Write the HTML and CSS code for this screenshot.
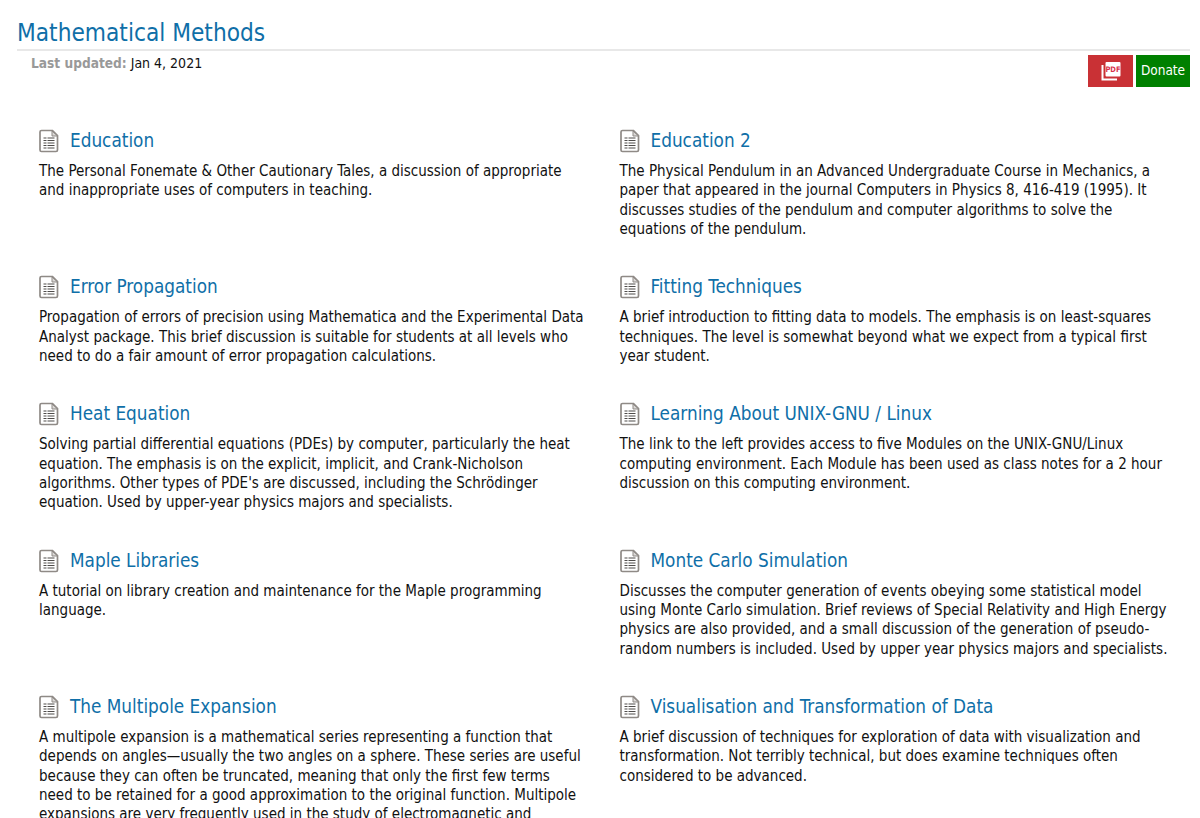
FILE: index.html
```html
<!DOCTYPE html>
<html lang="en">
<head>
    <meta charset="UTF-8" />
    <title>Mathematical Methods</title>
    <link rel="stylesheet" href="styles.css">
</head>
<body>
    <svg class="icon-defs" width="0" height="0">
        <symbol id="doc" viewBox="0 0 20 24">
            <path d="M2.500 1.500h11l5 5v14.500a1.500 1.500 0 0 1-1.500 1.500h-14.500a1.500 1.500 0 0 1-1.500-1.500v-18a1.500 1.500 0 0 1 1.500-1.500z" fill="#fff" stroke="#8f8a86" stroke-width="1.700"/>
            <path d="M13 2v5h5.500z" fill="#dcdad8" stroke="#8f8a86" stroke-width="1"/>
            <path d="M4.500 9h3M8.500 9h7M4.500 11.500h3M8.500 11.500h7M4.500 14h3M8.500 14h7M4.500 16.500h3M8.500 16.500h7M4.500 19h3M8.500 19h7" stroke="#4f4c4a" stroke-width="1.100"/>
        </symbol>
    </svg>

    <header class="page-head">
        <h1>Mathematical Methods</h1>
        <div class="meta-bar">
            <p class="updated"><strong>Last updated:</strong> Jan 4, 2021</p>
            <div class="actions">
                <a class="btn btn-pdf" href="#" aria-label="PDF">
                    <svg width="20" height="20" viewBox="0 0 20 20">
                        <path d="M1.500 4v14.500H16" fill="none" stroke="#fff" stroke-width="2"/>
                        <rect x="4.500" y="1" width="15" height="14.500" rx="1" fill="#fff"/>
                        <text x="12" y="11" class="pdf-label">PDF</text>
                    </svg>
                </a>
                <a class="btn btn-donate" href="#">Donate</a>
            </div>
        </div>
    </header>

    <main class="topics">
        <section class="topic">
            <h2><svg class="doc"><use href="#doc"/></svg><a href="#">Education</a></h2>
            <p>The Personal Fonemate &amp; Other Cautionary Tales, a discussion of appropriate and inappropriate uses of computers in teaching.</p>
        </section>
        <section class="topic">
            <h2><svg class="doc"><use href="#doc"/></svg><a href="#">Education 2</a></h2>
            <p>The Physical Pendulum in an Advanced Undergraduate Course in Mechanics, a paper that appeared in the journal Computers in Physics 8, 416-419 (1995). It discusses studies of the pendulum and computer algorithms to solve the equations of the pendulum.</p>
        </section>
        <section class="topic">
            <h2><svg class="doc"><use href="#doc"/></svg><a href="#">Error Propagation</a></h2>
            <p>Propagation of errors of precision using Mathematica and the Experimental Data Analyst package. This brief discussion is suitable for students at all levels who need to do a fair amount of error propagation calculations.</p>
        </section>
        <section class="topic">
            <h2><svg class="doc"><use href="#doc"/></svg><a href="#">Fitting Techniques</a></h2>
            <p>A brief introduction to fitting data to models. The emphasis is on least-squares techniques. The level is somewhat beyond what we expect from a typical first year student.</p>
        </section>
        <section class="topic">
            <h2><svg class="doc"><use href="#doc"/></svg><a href="#">Heat Equation</a></h2>
            <p>Solving partial differential equations (PDEs) by computer, particularly the heat equation. The emphasis is on the explicit, implicit, and Crank-Nicholson algorithms. Other types of PDE's are discussed, including the Schrödinger equation. Used by upper-year physics majors and specialists.</p>
        </section>
        <section class="topic">
            <h2><svg class="doc"><use href="#doc"/></svg><a href="#">Learning About UNIX-GNU / Linux</a></h2>
            <p>The link to the left provides access to five Modules on the UNIX-GNU/Linux computing environment. Each Module has been used as class notes for a 2 hour discussion on this computing environment.</p>
        </section>
        <section class="topic">
            <h2><svg class="doc"><use href="#doc"/></svg><a href="#">Maple Libraries</a></h2>
            <p>A tutorial on library creation and maintenance for the Maple programming language.</p>
        </section>
        <section class="topic">
            <h2><svg class="doc"><use href="#doc"/></svg><a href="#">Monte Carlo Simulation</a></h2>
            <p>Discusses the computer generation of events obeying some statistical model using Monte Carlo simulation. Brief reviews of Special Relativity and High Energy physics are also provided, and a small discussion of the generation of pseudo-random numbers is included. Used by upper year physics majors and specialists.</p>
        </section>
        <section class="topic">
            <h2><svg class="doc"><use href="#doc"/></svg><a href="#">The Multipole Expansion</a></h2>
            <p>A multipole expansion is a mathematical series representing a function that depends on angles—usually the two angles on a sphere. These series are useful because they can often be truncated, meaning that only the first few terms need to be retained for a good approximation to the original function. Multipole expansions are very frequently used in the study of electromagnetic and gravitational fields.</p>
        </section>
        <section class="topic">
            <h2><svg class="doc"><use href="#doc"/></svg><a href="#">Visualisation and Transformation of Data</a></h2>
            <p>A brief discussion of techniques for exploration of data with visualization and transformation. Not terribly technical, but does examine techniques often considered to be advanced.</p>
        </section>
    </main>
</body>
</html>
```

FILE: styles.css
```css
* {
    box-sizing: border-box;
    margin: 0;
    padding: 0;
}

html {
    overflow: hidden;
}

body {
    font-family: 'DejaVu Sans', sans-serif;
    font-stretch: condensed;
    font-size: 15px;
    line-height: 19.33px;
    color: #111;
    background: #fff;
    padding: 17px 10px 0 17px;
}

.icon-defs {
    position: absolute;
}

h1 {
    font-size: 24.2px;
    line-height: 32px;
    font-weight: 400;
    color: #0f6fa8;
    border-bottom: 2px solid #e8e8e8;
}

.meta-bar {
    display: flex;
    justify-content: space-between;
    padding: 3px 0 0 14px;
}

.updated {
    font-size: 14px;
}

.updated strong {
    font-size: 13.6px;
    color: #999;
}

.actions {
    display: flex;
    gap: 3px;
    margin-top: 1px;
}

.btn {
    display: flex;
    align-items: center;
    justify-content: center;
    height: 32px;
    color: #fff;
    text-decoration: none;
}

.btn-pdf {
    width: 45px;
    background: #c93135;
}

.pdf-label {
    font-size: 7.5px;
    font-weight: 700;
    fill: #d8324a;
    text-anchor: middle;
}

.btn-donate {
    width: 54px;
    font-size: 13.5px;
    background: #008000;
}

.topics {
    display: grid;
    grid-template-columns: 580.5px 550px;
    padding: 41px 0 0 22px;
}

.topic {
    padding-bottom: 35px;
}

.topic h2 {
    display: flex;
    align-items: center;
    gap: 11px;
    font-size: 18.8px;
    line-height: 26px;
    font-weight: 400;
    margin-bottom: 8px;
}

.topic h2 a {
    color: #0f6fa8;
    text-decoration: none;
}

.doc {
    width: 20px;
    height: 24px;
}

.topic p {
    width: 548.5px;
}
```
